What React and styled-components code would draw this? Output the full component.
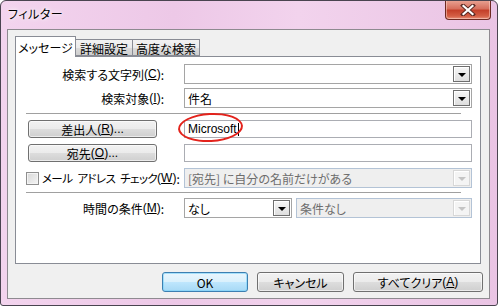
import React from 'react';
import styled, { createGlobalStyle } from 'styled-components';

const Global = createGlobalStyle`
  html, body {
    margin: 0;
    padding: 0;
    background: #fff;
  }
  body {
    font-family: "Noto Sans CJK JP", "Noto Sans", sans-serif;
    font-size: 12px;
    font-feature-settings: "palt";
    color: #000;
  }
  * {
    box-sizing: border-box;
  }
`;

const Window = styled.div`
  position: relative;
  width: 498px;
  height: 306px;
  border: 1px solid #4a4450;
  border-radius: 6px 6px 3px 3px;
  background: linear-gradient(90deg, #f3d4ee 0%, #edc8e7 35%, #f2d3ed 60%, #eac4e4 100%);
  display: flex;
  flex-direction: column;
  overflow: hidden;
`;

const TitleBar = styled.div`
  position: relative;
  height: 28px;
  display: flex;
  align-items: center;
  padding: 0 0 4px 7px;
`;

const Title = styled.span`
  font-size: 12px;
  letter-spacing: 0.5px;
  text-shadow: 0 0 6px #fff, 0 0 3px #fff;
`;

const CloseButton = styled.div`
  position: absolute;
  top: -1px;
  right: 6px;
  width: 46px;
  height: 20px;
  border: 1px solid #6d2a22;
  border-top: none;
  border-radius: 0 0 4px 4px;
  background: linear-gradient(180deg, #eaa596 0%, #d7705e 45%, #c4402a 55%, #d45f45 85%, #e8917c 100%);
  box-shadow: inset 0 0 0 1px rgba(255, 220, 210, 0.5);
  display: flex;
  align-items: center;
  justify-content: center;
`;

const Client = styled.div`
  margin: 0 7px 0 6px;
  height: 270px;
  border: 1px solid #8e8a90;
  background: #f0f0f0;
  padding: 6px 6px 6px 7px;
  display: flex;
  flex-direction: column;
`;

const TabStrip = styled.div`
  height: 20px;
  display: flex;
  align-items: flex-end;
  position: relative;
  z-index: 1;
`;

const Tab = styled.div`
  width: ${p => p.$w}px;
  height: ${p => (p.$active ? 21 : 17)}px;
  margin-bottom: ${p => (p.$active ? -1 : 0)}px;
  margin-left: ${p => (p.$active ? 0 : -1)}px;
  border: 1px solid #898c95;
  border-bottom: ${p => (p.$active ? 'none' : '1px solid #898c95')};
  background: ${p => (p.$active ? '#fff' : 'linear-gradient(180deg, #f2f2f2 0%, #ebebeb 50%, #dcdcdc 51%, #cfcfcf 100%)')};
  display: flex;
  align-items: center;
  justify-content: center;
  padding-top: ${p => (p.$active ? 0 : 1)}px;
  white-space: nowrap;
`;

const Panel = styled.div`
  height: 208px;
  margin-right: 2px;
  border: 1px solid #898c95;
  background: #fff;
  padding: 7px 8px 0 0;
  display: flex;
  flex-direction: column;
`;

const Row = styled.div`
  display: flex;
  align-items: center;
  height: ${p => p.$h}px;
  margin-top: ${p => p.$gap || 0}px;
`;

const LabelCell = styled.div`
  width: 168px;
  flex: none;
  display: flex;
  align-items: center;
  justify-content: ${p => (p.$left ? 'flex-start' : 'flex-end')};
  padding: ${p => (p.$left ? '0 0 0 10px' : '0 20px 0 0')};
  white-space: pre;
  overflow: hidden;
`;

const TightText = styled.span`
  font-size: 11.5px;
  letter-spacing: -0.6px;
  word-spacing: 3px;
`;

const Separator = styled.div`
  height: 1px;
  background: #a0a0a0;
  margin: ${p => p.$top}px 11px ${p => p.$bottom}px 10px;
`;

const Combo = styled.div`
  position: relative;
  width: ${p => p.$w}px;
  height: 20px;
  margin-left: ${p => p.$ml || 0}px;
  border: 1px solid ${p => (p.$disabled ? '#b3c3d6' : '#a5a5a5')};
  background: ${p => (p.$disabled ? '#efefef' : '#fff')};
  color: ${p => (p.$disabled ? '#6d6d6d' : '#000')};
  display: flex;
  align-items: center;
  padding-left: 3px;
  white-space: nowrap;
  overflow: hidden;
`;

const DropButton = styled.div`
  position: absolute;
  right: 1px;
  top: 1px;
  width: 17px;
  height: 16px;
  border: 1px solid ${p => (p.$disabled ? '#d7d7d7' : '#6e6e6e')};
  background: ${p => (p.$disabled ? '#f4f4f4' : 'linear-gradient(180deg, #f6f6f6, #dedede)')};
  box-shadow: inset 1px 1px 0 #fff;
  display: flex;
  align-items: center;
  justify-content: center;
`;

const Arrow = styled.span`
  width: 0;
  height: 0;
  margin-top: 2px;
  border-left: 4px solid transparent;
  border-right: 4px solid transparent;
  border-top: 4px solid ${p => (p.$disabled ? '#c4c4c4' : '#000')};
`;

const TextBox = styled.div`
  width: 288px;
  height: 18px;
  border: 1px solid #abadb3;
  background: #fff;
  display: flex;
  align-items: center;
  padding-left: 3px;
  font-family: "Liberation Sans", Arial, sans-serif;
  font-size: 12px;
`;

const Caret = styled.span`
  width: 1px;
  height: 13px;
  background: #000;
  margin-left: 1px;
`;

const PushButton = styled.div`
  width: ${p => p.$w}px;
  height: ${p => p.$h || 18}px;
  margin-left: ${p => p.$ml || 0}px;
  border: 1px solid ${p => (p.$default ? '#3c7fb1' : '#707070')};
  border-radius: 3px;
  background: ${p =>
    p.$default
      ? 'linear-gradient(180deg, #eaf6fd 0%, #d9f0fc 50%, #bee6fd 51%, #a7d9f5 100%)'
      : 'linear-gradient(180deg, #f2f2f2 0%, #ebebeb 50%, #dddddd 51%, #cfcfcf 100%)'};
  box-shadow: inset 0 0 0 1px ${p => (p.$default ? 'rgba(120, 210, 250, 0.6)' : 'rgba(255, 255, 255, 0.6)')};
  display: flex;
  align-items: center;
  justify-content: center;
  white-space: nowrap;
  flex: none;
`;

const CheckBox = styled.span`
  width: 13px;
  height: 13px;
  border: 1px solid #8f8f8f;
  background: linear-gradient(135deg, #d8d8d8, #f4f4f4);
  box-shadow: inset 0 0 0 1px #f4f4f4;
  margin-right: 3px;
  flex: none;
`;

const ButtonBar = styled.div`
  margin-top: 8px;
  height: 20px;
  display: flex;
  justify-content: flex-end;
  gap: 9px;
`;

const Mark = styled.div`
  position: absolute;
  left: 177px;
  top: 112px;
  width: 65px;
  height: 29px;
  border: 2px solid #e3231c;
  border-radius: 50%;
  transform: rotate(-3deg);
  pointer-events: none;
`;

const Ascii = styled.span`
  font-family: "Liberation Sans", Arial, sans-serif;
`;

const Key = ({ k }) => (
  <Ascii>
    (<u>{k}</u>)
  </Ascii>
);

export default function App() {
  return (
    <>
      <Global />
      <Window>
        <TitleBar>
          <Title>フィルター</Title>
          <CloseButton>
            <svg width="16" height="12" viewBox="0 0 16 12">
              <path d="M3 1.5 L13 10.5 M13 1.5 L3 10.5" stroke="#5a2a24" strokeWidth="4" strokeLinecap="square" />
              <path d="M3.5 2 L12.5 10 M12.5 2 L3.5 10" stroke="#fff" strokeWidth="2.2" strokeLinecap="square" />
            </svg>
          </CloseButton>
        </TitleBar>
        <Client>
          <TabStrip>
            <Tab $active $w={61}>メッセージ</Tab>
            <Tab $w={58}>詳細設定</Tab>
            <Tab $w={68}>高度な検索</Tab>
          </TabStrip>
          <Panel>
            <Row $h={20}>
              <LabelCell>検索する文字列<Key k="C" />:</LabelCell>
              <Combo $w={288}>
                <DropButton><Arrow /></DropButton>
              </Combo>
            </Row>
            <Row $h={20} $gap={4}>
              <LabelCell>検索対象<Key k="I" />:</LabelCell>
              <Combo $w={288}>
                件名
                <DropButton><Arrow /></DropButton>
              </Combo>
            </Row>
            <Separator $top={5} $bottom={6} />
            <Row $h={18}>
              <LabelCell $left>
                <PushButton $w={129} $ml={2}>差出人<Key k="R" /><Ascii>...</Ascii></PushButton>
              </LabelCell>
              <TextBox>
                Microsoft<Caret />
              </TextBox>
            </Row>
            <Row $h={18} $gap={6}>
              <LabelCell $left>
                <PushButton $w={129} $ml={2}>宛先<Key k="O" /><Ascii>...</Ascii></PushButton>
              </LabelCell>
              <TextBox />
            </Row>
            <Row $h={20} $gap={6}>
              <LabelCell $left>
                <CheckBox />
                <TightText>{'メール アドレス チェック'}</TightText>
                <Key k="W" />:
              </LabelCell>
              <Combo $w={288} $disabled>
                [宛先] に自分の名前だけがある
                <DropButton $disabled><Arrow $disabled /></DropButton>
              </Combo>
            </Row>
            <Separator $top={4} $bottom={5} />
            <Row $h={20}>
              <LabelCell>時間の条件<Key k="M" />:</LabelCell>
              <Combo $w={108}>
                なし
                <DropButton><Arrow /></DropButton>
              </Combo>
              <Combo $w={176} $ml={4} $disabled>
                条件なし
                <DropButton $disabled><Arrow $disabled /></DropButton>
              </Combo>
            </Row>
          </Panel>
          <ButtonBar>
            <PushButton $default $w={86} $h={20}>OK</PushButton>
            <PushButton $w={87} $h={20}>キャンセル</PushButton>
            <PushButton $w={130} $h={20}>すべてクリア<Key k="A" /></PushButton>
          </ButtonBar>
        </Client>
        <Mark />
      </Window>
    </>
  );
}
